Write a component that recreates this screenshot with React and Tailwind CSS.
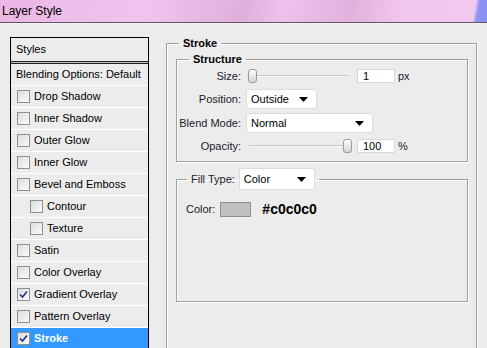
const font = { fontFamily: '"Liberation Sans", Arial, sans-serif' };

const styles = [
  { label: 'Drop Shadow' },
  { label: 'Inner Shadow' },
  { label: 'Outer Glow' },
  { label: 'Inner Glow' },
  { label: 'Bevel and Emboss' },
  { label: 'Contour', indent: true },
  { label: 'Texture', indent: true },
  { label: 'Satin' },
  { label: 'Color Overlay' },
  { label: 'Gradient Overlay', checked: true },
  { label: 'Pattern Overlay' },
  { label: 'Stroke', checked: true, active: true },
];

function Checkbox({ checked }) {
  return (
    <span className="flex h-[13px] w-[13px] shrink-0 items-center justify-center border border-[#8e8f8f] bg-gradient-to-br from-[#dcdcdc] to-[#fbfbfb]">
      {checked && (
        <svg width="9" height="9" viewBox="0 0 9 9">
          <path d="M1 4.5 L3.5 7 L8 1.5" fill="none" stroke="#21308c" strokeWidth="1.6" />
        </svg>
      )}
    </span>
  );
}

function Arrow() {
  return (
    <svg width="9" height="5" viewBox="0 0 9 5" className="shrink-0">
      <path d="M0 0 H9 L4.5 5 Z" fill="#000" />
    </svg>
  );
}

function Select({ value, width }) {
  return (
    <div className={`flex h-[20px] items-center justify-between rounded-[2px] border border-[#dcdcdc] bg-white pl-[4px] pr-[8px] text-[11px] text-black ${width}`}>
      <span>{value}</span>
      <Arrow />
    </div>
  );
}

function Slider({ thumbLeft }) {
  return (
    <div className="relative h-[14px] w-[102px]">
      <div className="absolute left-0 right-0 top-[6px] h-[2px] border-t border-[#c8c8c8] bg-[#f6f6f6]" />
      <div
        className={`absolute top-[0px] h-[14px] w-[9px] rounded-[3px] border border-[#9a9a9a] bg-gradient-to-b from-[#ffffff] to-[#d4d4d4] ${thumbLeft}`}
      />
    </div>
  );
}

function NumberBox({ value }) {
  return (
    <div className="flex h-[14px] w-[38px] items-center border border-[#dadada] bg-white pl-[5px] text-[11px] text-black">
      {value}
    </div>
  );
}

export default function App() {
  return (
    <div className="h-[348px] w-[487px] overflow-hidden bg-[#ececec]" style={font}>
      <div className="relative h-[22px] bg-[linear-gradient(100deg,#ebb7e4_0%,#f1c3ee_30%,#e0aedb_50%,#efc1ec_58%,#e2b0dc_72%,#f1c6ee_82%,#f2c9ef_97%,#8b92f2_97.8%)] pl-[2px] text-[12px] leading-[22px] text-black">
        Layer Style
      </div>
      <div className="h-px bg-[#625466]" />
      <div className="h-px bg-[#f4f4f4]" />

      <div className="flex">
        <div className="ml-[10px] mt-[13px] h-[330px] w-[139px] shrink-0 border border-black bg-[#ececec] text-[11px] text-black">
          <div className="flex h-[23px] items-center pl-[5px]">Styles</div>
          <div className="h-[3px] border-y border-[#222] bg-[#bdbdbd]" />
          <div className="flex h-[22px] items-center border-b border-white pl-[5px]">Blending Options: Default</div>
          {styles.map((s) => (
            <div
              key={s.label}
              className={`flex h-[22px] items-center gap-[4px] border-b border-white ${s.indent ? 'pl-[19px]' : 'pl-[6px]'} ${s.active ? 'bg-[#3399ff] font-bold text-white' : ''}`}
            >
              <Checkbox checked={s.checked} />
              <span>{s.label}</span>
            </div>
          ))}
        </div>

        <div className="ml-[17px] mt-[13px] w-[311px] shrink-0">
          <fieldset className="h-[330px] border border-[#a0a0a0] pl-[9px] pr-[8px] shadow-[inset_1px_1px_0_#ffffff,1px_1px_0_#ffffff]">
            <legend className="ml-[3px] px-[4px] text-[11px] font-bold leading-[13px] text-black">Stroke</legend>

            <fieldset className="mt-[3px] border border-[#a0a0a0] pb-[4px] shadow-[inset_1px_1px_0_#ffffff,1px_1px_0_#ffffff]">
              <legend className="ml-[12px] px-[4px] text-[11px] font-bold leading-[12px] text-black">Structure</legend>
              <div className="text-[11px] text-[#1a1a2a]">
                <div className="flex h-[22px] items-center">
                  <span className="w-[64px] text-right">Size:</span>
                  <div className="ml-[6px]"><Slider thumbLeft="left-[1px]" /></div>
                  <div className="ml-[8px]"><NumberBox value="1" /></div>
                  <span className="ml-[3px]">px</span>
                </div>
                <div className="flex h-[24px] items-center">
                  <span className="w-[64px] text-right">Position:</span>
                  <div className="ml-[5px]"><Select value="Outside" width="w-[71px]" /></div>
                </div>
                <div className="flex h-[24px] items-center">
                  <span className="w-[64px] text-right">Blend Mode:</span>
                  <div className="ml-[5px]"><Select value="Normal" width="w-[127px]" /></div>
                </div>
                <div className="flex h-[22px] items-center">
                  <span className="w-[64px] text-right">Opacity:</span>
                  <div className="ml-[8px]"><Slider thumbLeft="left-[94px]" /></div>
                  <div className="ml-[6px]"><NumberBox value="100" /></div>
                  <span className="ml-[3px]">%</span>
                </div>
              </div>
            </fieldset>

            <fieldset className="mt-[6px] h-[134px] border border-[#a0a0a0] shadow-[inset_1px_1px_0_#ffffff,1px_1px_0_#ffffff]">
              <legend className="ml-[10px] flex items-center px-[4px] text-[11px] text-[#1a1a2a]">
                <span>Fill Type:</span>
                <div className="ml-[4px] flex h-[22px] w-[76px] items-center justify-between rounded-[2px] border border-[#dcdcdc] bg-white pl-[4px] pr-[8px] text-black">
                  <span>Color</span>
                  <Arrow />
                </div>
              </legend>
              <div className="mt-[9px] flex items-center pl-[9px] text-[11px] text-[#1a1a2a]">
                <span>Color:</span>
                <div className="ml-[5px] h-[15px] w-[31px] border border-[#909090] bg-[#c0c0c0]" />
                <span className="ml-[11px] text-[14px] font-bold text-black">#c0c0c0</span>
              </div>
            </fieldset>
          </fieldset>
        </div>
      </div>
    </div>
  );
}
